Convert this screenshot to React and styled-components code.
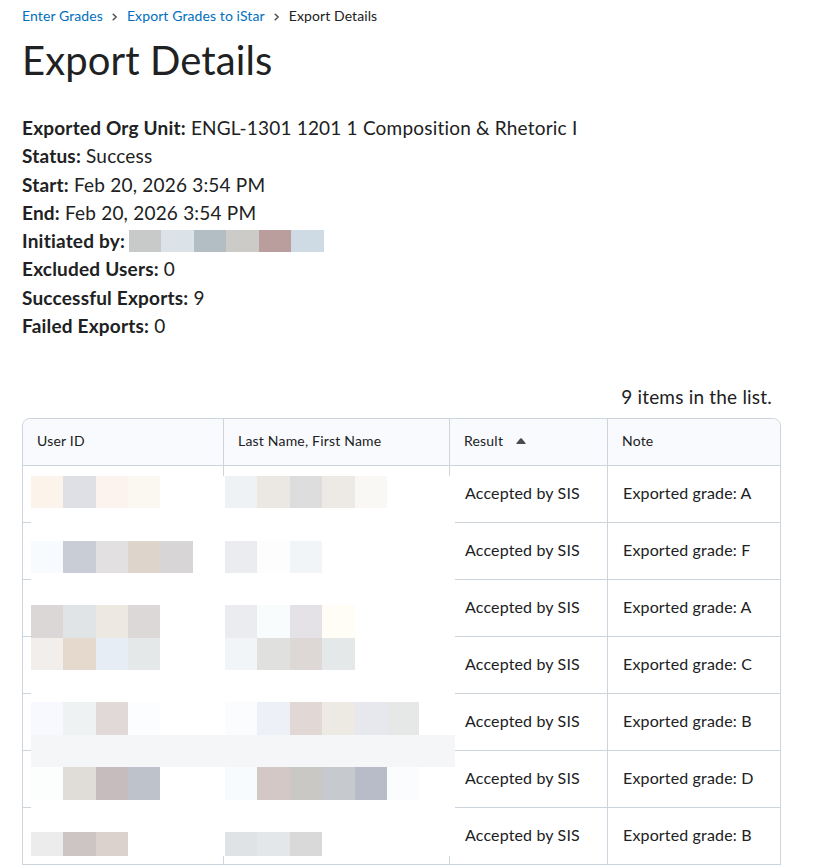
import React from "react";
import styled, { createGlobalStyle } from "styled-components";

const Global = createGlobalStyle`
  html, body { margin: 0; padding: 0; background: #fff; }
  body { font-family: Lato, "Noto Sans", sans-serif; color: #202122; }
`;

const Page = styled.div`
  padding: 6px 45px 0 22px;
`;

const Crumbs = styled.nav`
  display: flex;
  align-items: center;
  font-size: 14px;
  line-height: 20px;
  height: 20px;
  letter-spacing: 0.1px;
`;

const Crumb = styled.a`
  color: ${(p) => (p.$current ? "#202122" : "#006fbf")};
  text-decoration: none;
`;

const Chevron = styled.svg`
  width: 6px;
  height: 8px;
  margin: 1px 9px 0 9px;
`;

const Title = styled.h1`
  margin: 10px 0 0;
  font-size: 40px;
  font-weight: 400;
  line-height: 48px;
  letter-spacing: 0.1px;
`;

const Details = styled.div`
  margin-top: 30px;
  font-size: 19px;
  line-height: 28.3px;
  letter-spacing: 0.2px;
`;

const Line = styled.div`
  display: flex;
  align-items: center;
  white-space: nowrap;
`;

const Label = styled.b`
  font-weight: 700;
  margin-right: 5px;
`;

const Swatches = styled.span`
  display: inline-flex;
  height: 22px;
  margin-left: -1px;
`;

const Swatch = styled.span`
  width: ${(p) => p.$w}px;
  height: 100%;
  background: ${(p) => p.$c};
`;

const Count = styled.div`
  margin-top: 43px;
  text-align: right;
  padding-right: 9px;
  font-size: 19px;
  line-height: 28px;
  letter-spacing: 0.2px;
`;

const TableWrap = styled.div`
  position: relative;
  margin-top: 7px;
  width: 759px;
`;

const Table = styled.table`
  width: 100%;
  table-layout: fixed;
  border-collapse: separate;
  border-spacing: 0;
  border: 1px solid #cdd5dc;
  border-radius: 8px;
  font-size: 16px;
  letter-spacing: 0.15px;
`;

const Th = styled.th`
  background: #f9fafe;
  font-weight: 400;
  font-size: 14px;
  letter-spacing: 0.2px;
  text-align: left;
  height: 43px;
  padding: 0 0 3px 14px;
  border-bottom: 1px solid #cdd5dc;
  border-left: ${(p) => (p.$first ? "none" : "1px solid #cdd5dc")};
  &:first-child { border-top-left-radius: 8px; }
  &:last-child { border-top-right-radius: 8px; }
`;

const Td = styled.td`
  height: 52px;
  padding: 0 0 4px 15px;
  border-top: ${(p) => (p.$firstRow ? "none" : "1px solid #cdd5dc")};
  border-left: ${(p) => (p.$first ? "none" : "1px solid #cdd5dc")};
  white-space: nowrap;
`;

const SortIcon = styled.svg`
  width: 10px;
  height: 6px;
  margin-left: 13px;
  vertical-align: 2px;
`;

const Redaction = styled.div`
  position: absolute;
  left: 9px;
  top: 58px;
  width: 424px;
  height: 380px;
  background: #fff;
  display: flex;
  flex-direction: column;
`;

const Strip = styled.div`
  display: grid;
  grid-template-columns: 194px 1fr;
  height: ${(p) => p.$h}px;
  margin-top: ${(p) => p.$mt || 0}px;
  background: ${(p) => p.$bg || "transparent"};
  flex-shrink: 0;
`;

const Blocks = styled.div`
  display: flex;
  height: 100%;
`;

const W = [32, 33, 32, 32, 33, 32];
const WN = [32, 33, 32, 33, 32, 32];

function Mosaic({ colors, widths }) {
  return (
    <Blocks>
      {colors.map((c, i) => (
        <Swatch key={i} $w={widths[i]} $c={c} />
      ))}
    </Blocks>
  );
}

const strips = [
  { h: 32, mt: 0, u: ["#fcf3ea", "#dfe0e5", "#fcf3ee", "#fbf8f2"], n: ["#eff2f5", "#ebe7e2", "#dcdddc", "#ede9e5", "#faf8f5"] },
  { h: 32, mt: 33, u: ["#f7fbfe", "#c9cdd6", "#e2e0e0", "#ddd4cb", "#d7d5d6"], n: ["#ebecef", "#fdfdfd", "#f1f5f8"] },
  { h: 33, mt: 32, u: ["#dbd7d7", "#e0e4e6", "#ede8e2", "#dcd8d7"], n: ["#ebecef", "#f9fcfd", "#e4e2e6", "#fffdf6"] },
  { h: 32, mt: 0, u: ["#f2eeeb", "#e5d9ce", "#e6edf4", "#e4e8e9"], n: ["#f1f5f7", "#e0e1df", "#ddd7d6", "#e4e8e9"] },
  { h: 33, mt: 32, u: ["#f8f9fe", "#eff2f2", "#e1d8d8", "#fcfdfe"], n: ["#fbfcfe", "#eef0f8", "#e1d7d5", "#ede9e3", "#e6e8ed", "#e6e8e8"] },
  { h: 32, mt: 0, u: [], n: [], bg: "#f5f6f8" },
  { h: 33, mt: 0, u: ["#fcfefd", "#e0ddd9", "#c7bcbd", "#bec2cb"], n: ["#f7fbfe", "#d3c8c5", "#c9c8c5", "#c6c9cd", "#b8bcc8", "#fbfcfe"] },
  { h: 24, mt: 32, u: ["#ececec", "#cdc5c4", "#dbd1cd"], n: ["#dfe3e6", "#e3e7e9", "#d9d9da"] },
];

const grades = ["A", "F", "A", "C", "B", "D", "B", "B", "A"];

const details = [
  ["Exported Org Unit:", "ENGL-1301 1201 1 Composition & Rhetoric I"],
  ["Status:", "Success"],
  ["Start:", "Feb 20, 2026 3:54 PM"],
  ["End:", "Feb 20, 2026 3:54 PM"],
  ["Initiated by:", null],
  ["Excluded Users:", "0"],
  ["Successful Exports:", "9"],
  ["Failed Exports:", "0"],
];

function ChevronIcon() {
  return (
    <Chevron viewBox="0 0 6 8">
      <path d="M1.2 1.2 L4.2 4 L1.2 6.8" fill="none" stroke="#494c4e" strokeWidth="1.5" strokeLinecap="round" strokeLinejoin="round" />
    </Chevron>
  );
}

export default function App() {
  return (
    <>
      <Global />
      <Page>
        <Crumbs>
          <Crumb href="#">Enter Grades</Crumb>
          <ChevronIcon />
          <Crumb href="#">Export Grades to iStar</Crumb>
          <ChevronIcon />
          <Crumb as="span" $current>Export Details</Crumb>
        </Crumbs>
        <Title>Export Details</Title>
        <Details>
          {details.map(([l, v]) => (
            <Line key={l}>
              <Label>{l}</Label>
              {v !== null ? (
                v
              ) : (
                <Swatches>
                  {["#c8caca", "#dce3e8", "#b2bec4", "#cdcbc8", "#ba9d9d", "#cfdbe4"].map((c, i) => (
                    <Swatch key={i} $w={i % 2 ? 33 : 32} $c={c} />
                  ))}
                </Swatches>
              )}
            </Line>
          ))}
        </Details>
        <Count>9 items in the list.</Count>
        <TableWrap>
          <Table>
            <colgroup>
              <col style={{ width: 200 }} />
              <col style={{ width: 226 }} />
              <col style={{ width: 158 }} />
              <col />
            </colgroup>
            <thead>
              <tr>
                <Th $first>User ID</Th>
                <Th>Last Name, First Name</Th>
                <Th>
                  Result
                  <SortIcon viewBox="0 0 10 6">
                    <path d="M4.2 0.6 Q5 -0.2 5.8 0.6 L9.6 5.2 Q10 6 9 6 L1 6 Q0 6 0.4 5.2 Z" fill="#494c4e" />
                  </SortIcon>
                </Th>
                <Th>Note</Th>
              </tr>
            </thead>
            <tbody>
              {grades.map((g, i) => (
                <tr key={i}>
                  <Td $first $firstRow={i === 0}></Td>
                  <Td $firstRow={i === 0}></Td>
                  <Td $firstRow={i === 0}>Accepted by SIS</Td>
                  <Td $firstRow={i === 0}>Exported grade: {g}</Td>
                </tr>
              ))}
            </tbody>
          </Table>
          <Redaction>
            {strips.map((s, i) => (
              <Strip key={i} $h={s.h} $mt={s.mt} $bg={s.bg}>
                <Mosaic colors={s.u} widths={W} />
                <Mosaic colors={s.n} widths={WN} />
              </Strip>
            ))}
          </Redaction>
        </TableWrap>
      </Page>
    </>
  );
}
